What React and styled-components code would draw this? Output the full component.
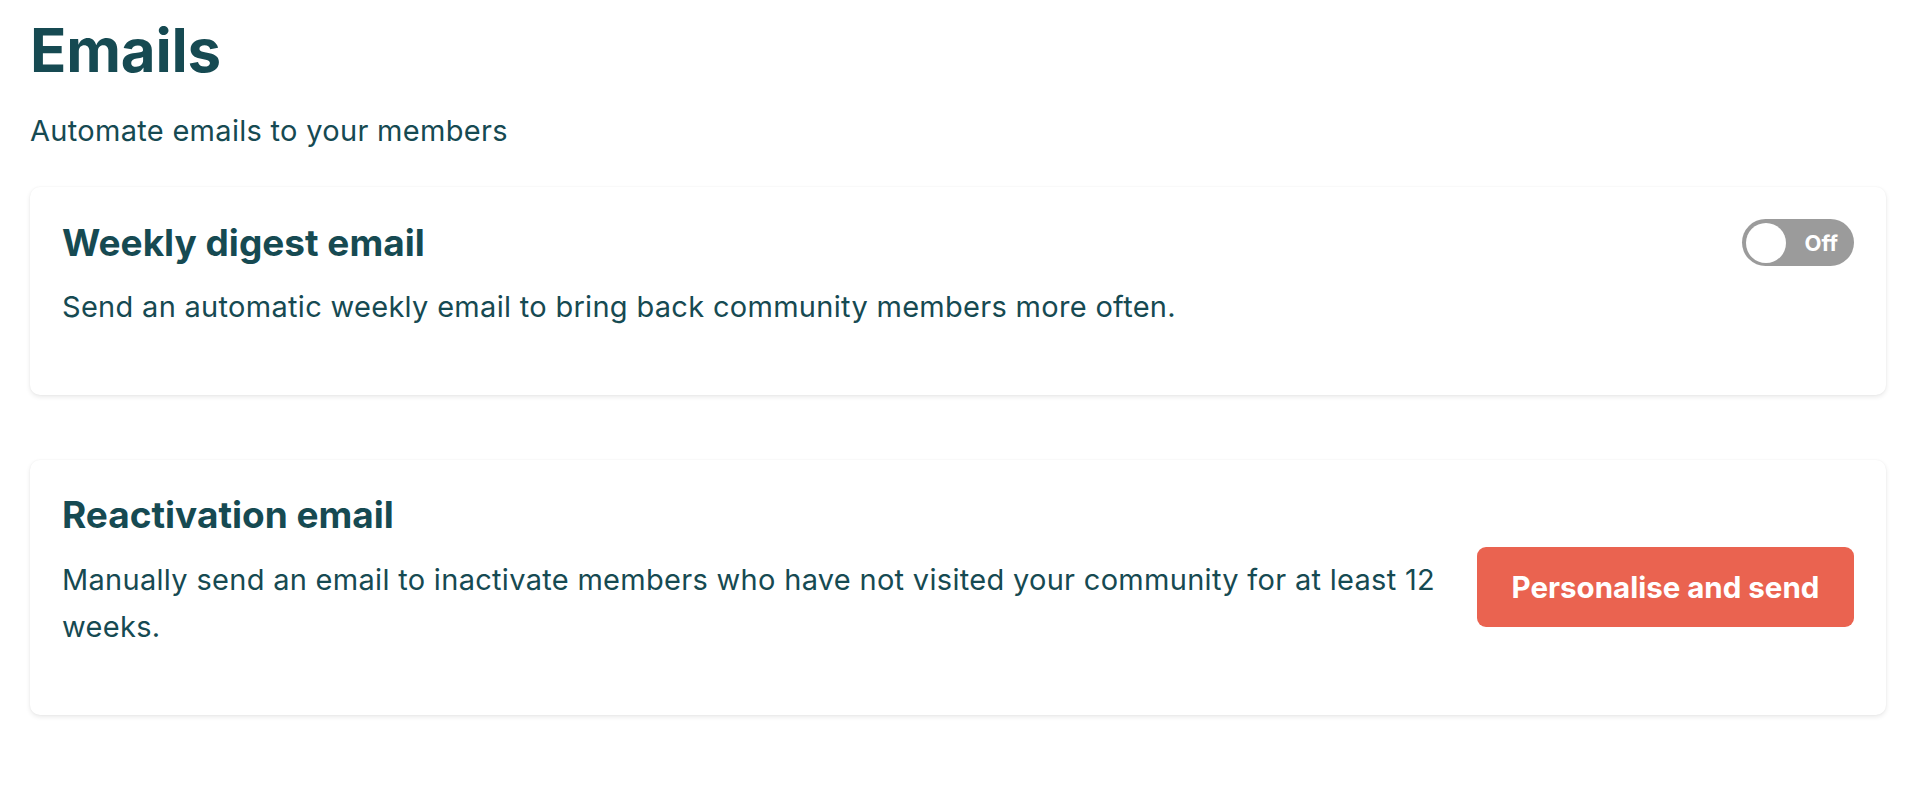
import React from "react";
import styled, { createGlobalStyle } from "styled-components";

const GlobalStyle = createGlobalStyle`
  html, body {
    margin: 0;
    padding: 0;
    background: #ffffff;
  }
  body {
    font-family: Inter, "Noto Sans", "Liberation Sans", sans-serif;
    color: #164a52;
  }
  * { box-sizing: border-box; }
`;

const Page = styled.main`
  padding: 15px 44px 40px 30px;
`;

const Heading = styled.h1`
  margin: 0;
  font-size: 60px;
  line-height: 70px;
  font-weight: 700;
  color: #164a52;
  letter-spacing: -0.2px;
`;

const Subtitle = styled.p`
  margin: 25px 0 35px;
  font-size: 29px;
  line-height: 42px;
  font-weight: 400;
  letter-spacing: 0.3px;
  color: #164a52;
`;

const Stack = styled.div`
  display: flex;
  flex-direction: column;
  gap: 65px;
`;

const Card = styled.section`
  background: #ffffff;
  border-radius: 10px;
  padding: 32px;
  box-shadow: 0 2px 5px rgba(0, 0, 0, 0.09), 0 0 2px rgba(0, 0, 0, 0.05);
  display: flex;
  align-items: center;
  gap: 32px;
`;

const CardBody = styled.div`
  flex: 1;
  min-width: 0;
`;

const CardHeader = styled.div`
  display: flex;
  align-items: center;
  justify-content: space-between;
  min-height: 47px;
`;

const CardTitle = styled.h2`
  margin: 0;
  font-size: 37px;
  line-height: 44px;
  font-weight: 700;
  color: #164a52;
`;

const Description = styled.p`
  margin: 17px 0 32px;
  font-size: 29px;
  line-height: 47.5px;
  font-weight: 400;
  letter-spacing: 0.3px;
  color: #164a52;
`;

const Toggle = styled.button`
  display: flex;
  align-items: center;
  justify-content: space-between;
  width: 112px;
  height: 47px;
  padding: 0 16px 0 3.5px;
  border: none;
  border-radius: 24px;
  background: ${(p) => (p.$on ? "#2aa87a" : "#9b9b9b")};
  cursor: pointer;
  font-family: inherit;
`;

const Knob = styled.span`
  width: 40px;
  height: 40px;
  border-radius: 50%;
  background: #ffffff;
`;

const ToggleLabel = styled.span`
  color: #ffffff;
  font-size: 22px;
  font-weight: 700;
  line-height: 1;
`;

const PrimaryButton = styled.button`
  flex: none;
  width: 377px;
  height: 80px;
  padding: 0;
  border: none;
  border-radius: 9px;
  background: #ea6350;
  color: #ffffff;
  font-family: inherit;
  font-size: 29.5px;
  font-weight: 700;
  cursor: pointer;
`;

export default function App() {
  return (
    <>
      <GlobalStyle />
      <Page>
        <Heading>Emails</Heading>
        <Subtitle>Automate emails to your members</Subtitle>
        <Stack>
          <Card>
            <CardBody>
              <CardHeader>
                <CardTitle>Weekly digest email</CardTitle>
                <Toggle type="button" aria-pressed="false">
                  <Knob />
                  <ToggleLabel>Off</ToggleLabel>
                </Toggle>
              </CardHeader>
              <Description>
                Send an automatic weekly email to bring back community members more often.
              </Description>
            </CardBody>
          </Card>
          <Card>
            <CardBody>
              <CardHeader>
                <CardTitle>Reactivation email</CardTitle>
              </CardHeader>
              <Description>
                Manually send an email to inactivate members who have not visited your community for at least 12 weeks.
              </Description>
            </CardBody>
            <PrimaryButton type="button">Personalise and send</PrimaryButton>
          </Card>
        </Stack>
      </Page>
    </>
  );
}
